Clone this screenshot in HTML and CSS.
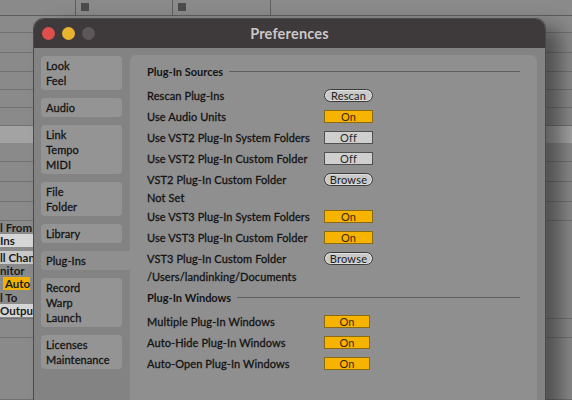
FILE: index.html
```html
<!DOCTYPE html>
<html>
<head>
<meta charset="utf-8">
<link rel="stylesheet" href="styles.css">
</head>
<body>
<div class="desktop">
  <div class="bg-top">
    <div class="cell c1"></div>
    <div class="cell c2"><span class="sq"></span></div>
    <div class="cell c3"><span class="sq"></span></div>
    <div class="cell c4"></div>
  </div>
  <div class="bg-rows">
    <div class="br"></div>
    <div class="br"></div>
    <div class="br"></div>
    <div class="br"></div>
    <div class="br"></div>
    <div class="br"></div>
    <div class="br band"></div>
    <div class="br"></div>
    <div class="br"></div>
    <div class="br"></div>
    <div class="br"></div>
    <div class="bt">l From</div>
    <div class="bt"><span class="bbox light">Ins</span></div>
    <div class="bt"></div>
    <div class="bt"><span class="bbox pale">ll Chan</span></div>
    <div class="bt">nitor</div>
    <div class="bt"><span class="bbox auto">Auto</span></div>
    <div class="bt">l To</div>
    <div class="bt"><span class="bbox light">Output</span></div>
    <div class="br top"></div>
    <div class="br"></div>
  </div>

  <div class="window">
    <div class="titlebar">
      <div class="lights">
        <span class="light-dot red"></span>
        <span class="light-dot yellow"></span>
        <span class="light-dot grey"></span>
      </div>
      <div class="title">Preferences</div>
      <div></div>
    </div>
    <div class="winbody">
      <div class="sidebar">
        <div class="group"><div>Look</div><div>Feel</div></div>
        <div class="group"><div>Audio</div></div>
        <div class="group"><div>Link</div><div>Tempo</div><div>MIDI</div></div>
        <div class="group"><div>File</div><div>Folder</div></div>
        <div class="group"><div>Library</div></div>
        <div class="group sel"><div>Plug-Ins</div></div>
        <div class="group"><div>Record</div><div>Warp</div><div>Launch</div></div>
        <div class="group"><div>Licenses</div><div>Maintenance</div></div>
      </div>
      <div class="panel">
        <div class="sec-head"><span>Plug-In Sources</span><span class="rule"></span></div>
        <div class="row"><span class="label">Rescan Plug-Ins</span><span class="btn pill">Rescan</span></div>
        <div class="row"><span class="label">Use Audio Units</span><span class="btn on">On</span></div>
        <div class="row"><span class="label">Use VST2 Plug-In System Folders</span><span class="btn off">Off</span></div>
        <div class="row"><span class="label">Use VST2 Plug-In Custom Folder</span><span class="btn off">Off</span></div>
        <div class="row"><span class="label">VST2 Plug-In Custom Folder</span><span class="btn pill">Browse</span></div>
        <div class="sub">Not Set</div>
        <div class="row"><span class="label">Use VST3 Plug-In System Folders</span><span class="btn on">On</span></div>
        <div class="row"><span class="label">Use VST3 Plug-In Custom Folder</span><span class="btn on">On</span></div>
        <div class="row"><span class="label">VST3 Plug-In Custom Folder</span><span class="btn pill">Browse</span></div>
        <div class="sub">/Users/landinking/Documents</div>
        <div class="sec-head second"><span>Plug-In Windows</span><span class="rule"></span></div>
        <div class="row"><span class="label">Multiple Plug-In Windows</span><span class="btn on narrow">On</span></div>
        <div class="row"><span class="label">Auto-Hide Plug-In Windows</span><span class="btn on narrow">On</span></div>
        <div class="row"><span class="label">Auto-Open Plug-In Windows</span><span class="btn on narrow">On</span></div>
      </div>
    </div>
  </div>
</div>
</body>
</html>
```

FILE: styles.css
```css
html, body {
  margin: 0;
  padding: 0;
}
body {
  width: 572px;
  height: 400px;
  overflow: hidden;
  background: #8a8a8a;
  font-family: Lato, "Liberation Sans", sans-serif;
  color: #151515;
}
.desktop {
  position: relative;
  width: 572px;
  height: 400px;
  overflow: hidden;
  background: #8a8a8a;
}

/* background app */
.bg-top {
  display: flex;
  height: 16px;
  box-sizing: border-box;
  border-bottom: 1px solid #5e5e5e;
}
.cell {
  box-sizing: border-box;
  border-right: 1px solid #5e5e5e;
  padding: 3px 0 0 5px;
}
.c1 { width: 76px; }
.c2 { width: 97px; }
.c3 { width: 98px; }
.c4 { flex: 1; border-right: none; }
.sq {
  display: block;
  width: 8px;
  height: 8px;
  background: #4c4c4c;
}
.bg-rows {
  display: grid;
  grid-template-rows: 17px 20px 19px 18px 18px 18px 17px 19px 20px 20px 19px 13px 14px 3px 13px 13px 14px 13px 14px 20px 1fr;
  height: 384px;
}
.br {
  box-sizing: border-box;
  border-bottom: 1px solid #727272;
}
.br.band {
  background: #a3a3a3;
  border-bottom: none;
}
.br.top {
  border-top: 1px solid #727272;
}
.bt {
  font-size: 11.5px;
  font-weight: 700;
  line-height: 13px;
  color: #1c1c1c;
  white-space: nowrap;
  overflow: hidden;
}
.bbox {
  display: block;
  width: 34px;
  height: 13px;
  line-height: 13px;
}
.bbox.light { background: #d6d6d6; }
.bbox.pale { background: #c9c9c9; }
.bbox.auto {
  width: 25px;
  margin-left: 3px;
  background: #f0b100;
  padding-left: 2px;
}

/* window */
.window {
  position: absolute;
  left: 34px;
  top: 19px;
  width: 511px;
  height: 400px;
  background: #838383;
  border-radius: 10px 10px 0 0;
  overflow: hidden;
  box-shadow: 0 0 0 1px #4a4a4a, 16px 8px 20px rgba(0, 0, 0, 0.42);
}
.titlebar {
  height: 29px;
  background: #3e393a;
  display: grid;
  grid-template-columns: 1fr auto 1fr;
  align-items: center;
}
.lights {
  display: flex;
  gap: 7px;
  padding-left: 8px;
}
.light-dot {
  width: 13px;
  height: 13px;
  border-radius: 50%;
  display: block;
}
.red { background: #df4f4e; }
.yellow { background: #e6b42e; }
.grey { background: #5d5759; }
.title {
  font-size: 14.5px;
  font-weight: 700;
  color: #cbc7c8;
  letter-spacing: 0.2px;
}
.winbody {
  display: flex;
  padding: 7px 0 0 7px;
  align-items: flex-start;
}
.sidebar {
  width: 81px;
  margin-top: 1px;
  display: flex;
  flex-direction: column;
  gap: 8px;
  position: relative;
  z-index: 1;
}
.group {
  background: #949494;
  border-radius: 4px;
  padding: 2px 5px;
  font-size: 11px;
  line-height: 15px;
  color: #141414;
  -webkit-text-stroke: 0.3px #141414;
  letter-spacing: 0.1px;
}
.group.sel {
  background: #8f8f8f;
  margin-right: -8px;
  border-radius: 4px 0 0 4px;
}
.panel {
  margin-left: 8px;
  width: 407px;
  height: 360px;
  box-sizing: border-box;
  background: #8f8f8f;
  border-radius: 6px 6px 0 0;
  padding: 6px 17px 0 17px;
  font-size: 11px;
  color: #141414;
}
.label, .sub {
  -webkit-text-stroke: 0.3px #141414;
  letter-spacing: 0.1px;
}
.sec-head {
  display: flex;
  align-items: center;
  gap: 6px;
  height: 20px;
  font-weight: 700;
  margin-bottom: 4px;
}
.sec-head.second {
  margin-top: 2px;
}
.rule {
  flex: 1;
  height: 1px;
  background: #5e5e5e;
}
.row {
  display: flex;
  align-items: center;
  height: 21px;
}
.label {
  width: 177px;
  white-space: nowrap;
}
.sub {
  height: 16px;
  line-height: 16px;
}
.btn {
  box-sizing: border-box;
  width: 49px;
  height: 13px;
  display: flex;
  align-items: center;
  justify-content: center;
  font-size: 11px;
  line-height: 11px;
  letter-spacing: 0.2px;
}
.btn.narrow { width: 46px; }
.on {
  background: #f6b300;
  border: 1px solid #8a6a12;
  color: #3a2700;
}
.off {
  background: #cfcfcf;
  border: 1px solid #505050;
  color: #2a2a2a;
}
.pill {
  background: #c9c9c9;
  border: 1px solid #3a3a3a;
  border-radius: 7px;
  color: #222;
  box-shadow: inset 0 0 0 1px #e0e0e0;
}
```
